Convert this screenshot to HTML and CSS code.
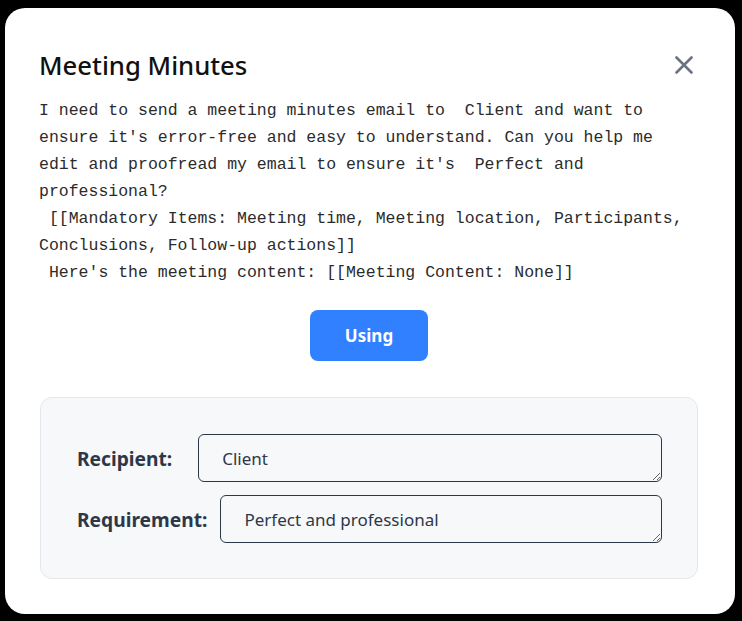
FILE: index.html
```html
<!DOCTYPE html>
<html lang="en">
<head>
<meta charset="utf-8">
<title>Meeting Minutes</title>
<link rel="stylesheet" href="styles.css">
</head>
<body>
<div class="modal">
  <div class="modal-header">
    <h2 class="modal-title">Meeting Minutes</h2>
    <button class="close-btn" aria-label="Close">
      <svg width="18" height="18" viewBox="0 0 18 18"><path d="M1.5 1.5L16.5 16.5M16.5 1.5L1.5 16.5" stroke="#6b7280" stroke-width="2.6" stroke-linecap="round"/></svg>
    </button>
  </div>
  <div class="prompt">I need to send a meeting minutes email to  Client and want to ensure it's error-free and easy to understand. Can you help me edit and proofread my email to ensure it's  Perfect and professional?
 [[Mandatory Items: Meeting time, Meeting location, Participants, Conclusions, Follow-up actions]]
 Here's the meeting content: [[Meeting Content: None]]</div>
  <div class="actions">
    <button class="use-btn">Using</button>
  </div>
  <div class="fields">
    <div class="field-row">
      <label class="field-label label-recipient">Recipient:</label>
      <textarea class="field-input" rows="1">Client</textarea>
    </div>
    <div class="field-row">
      <label class="field-label">Requirement:</label>
      <textarea class="field-input" rows="1">Perfect and professional</textarea>
    </div>
  </div>
</div>
</body>
</html>
```

FILE: styles.css
```css
html, body {
  margin: 0;
  padding: 0;
  background: #000;
}
body {
  width: 742px;
  height: 621px;
  overflow: hidden;
}
.modal {
  box-sizing: border-box;
  margin: 8px 0 0 5px;
  width: 730px;
  height: 606px;
  background: #fff;
  border-radius: 20px;
  padding: 41px 37px 0 35px;
}
.modal-header {
  display: flex;
  align-items: center;
  justify-content: space-between;
  height: 34px;
}
.modal-title {
  margin: 0 0 0 -1px;
  font-family: "Noto Sans", sans-serif;
  font-weight: 500;
  font-size: 25.7px;
  line-height: 34px;
  color: #111;
}
.close-btn {
  border: 0;
  background: none;
  padding: 0;
  margin-right: 5px;
  width: 18px;
  height: 18px;
  display: flex;
  margin-top: -3px;
}
.prompt {
  margin-top: 14px;
  margin-left: -1px;
  font-family: "Liberation Mono", monospace;
  font-size: 16.5px;
  line-height: 27px;
  color: #2b2b2b;
  white-space: pre-wrap;
}
.actions {
  display: flex;
  justify-content: center;
  margin-top: 24px;
}
.use-btn {
  width: 118px;
  height: 51px;
  border: 0;
  border-radius: 8px;
  background: #3080ff;
  color: #fff;
  font-family: "Noto Sans", sans-serif;
  font-weight: 700;
  font-size: 17px;
}
.fields {
  margin-top: 36px;
  box-sizing: border-box;
  height: 182px;
  background: #f7f8fa;
  border: 1px solid #e5e7eb;
  border-radius: 12px;
  padding: 36px 35px 0 36px;
  display: flex;
  flex-direction: column;
  gap: 13px;
}
.field-row {
  display: flex;
  align-items: center;
}
.field-label {
  font-family: "Noto Sans", sans-serif;
  font-weight: 700;
  font-size: 19.2px;
  color: #2d3748;
  margin-right: 13px;
  white-space: nowrap;
}
.label-recipient {
  margin-right: 26px;
}
.field-input {
  flex: 1;
  box-sizing: border-box;
  height: 48px;
  border: 1px solid #2d3748;
  border-radius: 6px;
  background: #f7f8fa;
  padding: 12px 22px 10px 23px;
  font-family: "Noto Sans", sans-serif;
  font-size: 17px;
  line-height: 24px;
  color: #2d3748;
  resize: vertical;
  overflow: hidden;
}
```
